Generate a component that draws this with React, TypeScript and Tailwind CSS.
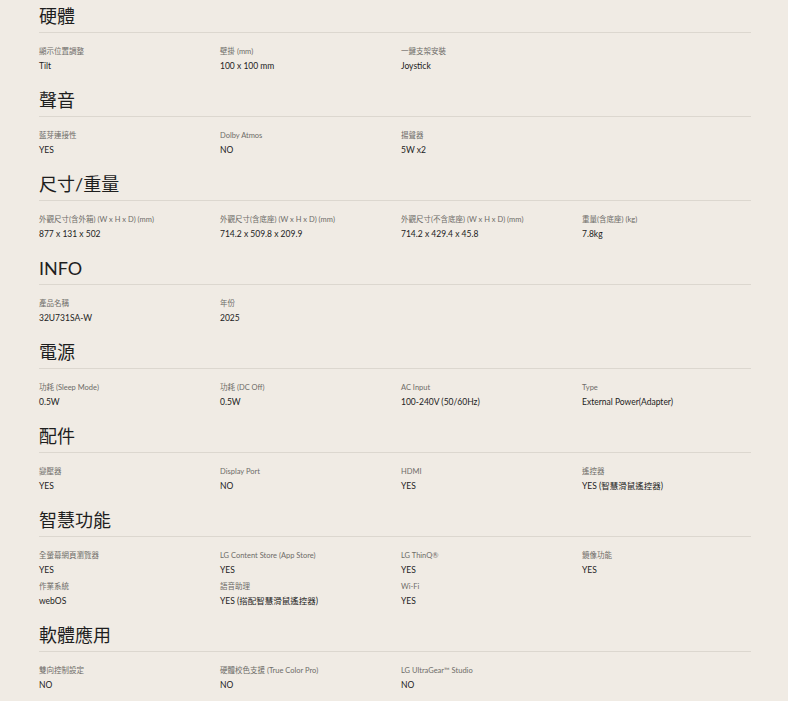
type Spec = { label: string; value: string };

const sections: { title: string; rows: Spec[] }[] = [
  {
    title: '硬體',
    rows: [
      { label: '顯示位置調整', value: 'Tilt' },
      { label: '壁掛 (mm)', value: '100 x 100 mm' },
      { label: '一鍵支架安裝', value: 'Joystick' },
    ],
  },
  {
    title: '聲音',
    rows: [
      { label: '藍芽連接性', value: 'YES' },
      { label: 'Dolby Atmos', value: 'NO' },
      { label: '揚聲器', value: '5W x2' },
    ],
  },
  {
    title: '尺寸/重量',
    rows: [
      { label: '外觀尺寸(含外箱) (W x H x D) (mm)', value: '877 x 131 x 502' },
      { label: '外觀尺寸(含底座) (W x H x D) (mm)', value: '714.2 x 509.8 x 209.9' },
      { label: '外觀尺寸(不含底座) (W x H x D) (mm)', value: '714.2 x 429.4 x 45.8' },
      { label: '重量(含底座) (kg)', value: '7.8kg' },
    ],
  },
  {
    title: 'INFO',
    rows: [
      { label: '產品名稱', value: '32U731SA-W' },
      { label: '年份', value: '2025' },
    ],
  },
  {
    title: '電源',
    rows: [
      { label: '功耗 (Sleep Mode)', value: '0.5W' },
      { label: '功耗 (DC Off)', value: '0.5W' },
      { label: 'AC Input', value: '100-240V (50/60Hz)' },
      { label: 'Type', value: 'External Power(Adapter)' },
    ],
  },
  {
    title: '配件',
    rows: [
      { label: '變壓器', value: 'YES' },
      { label: 'Display Port', value: 'NO' },
      { label: 'HDMI', value: 'YES' },
      { label: '遙控器', value: 'YES (智慧滑鼠遙控器)' },
    ],
  },
  {
    title: '智慧功能',
    rows: [
      { label: '全螢幕網頁瀏覽器', value: 'YES' },
      { label: 'LG Content Store (App Store)', value: 'YES' },
      { label: 'LG ThinQ®', value: 'YES' },
      { label: '鏡像功能', value: 'YES' },
      { label: '作業系統', value: 'webOS' },
      { label: '語音助理', value: 'YES (搭配智慧滑鼠遙控器)' },
      { label: 'Wi-Fi', value: 'YES' },
    ],
  },
  {
    title: '軟體應用',
    rows: [
      { label: '雙向控制設定', value: 'NO' },
      { label: '硬體校色支援 (True Color Pro)', value: 'NO' },
      { label: 'LG UltraGear™ Studio', value: 'NO' },
    ],
  },
];

// Lato for latin, CJK falls through to Noto
const font = { fontFamily: 'Lato, "Noto Sans CJK TC", sans-serif' };

const App = () => {
  return (
    <div className="min-h-[701px] w-full bg-[#f0ebe4] pt-1" style={font}>
      <div className="ml-[39px] flex w-[712px] flex-col gap-[15px]">
        {sections.map((section) => (
          <section key={section.title}>
            <h2 className="border-b border-[#dcd7cf] pb-1 text-[18px] leading-[24px] text-[#1e1e1e]">
              {section.title}
            </h2>
            <div className="grid grid-cols-4 gap-x-3 gap-y-1 pt-[13px]">
              {section.rows.map((row) => (
                <div key={row.label} className="flex flex-col gap-px">
                  <div className="text-[7.5px] leading-[12px] text-[#6e6b68]">{row.label}</div>
                  <div className="text-[8.5px] leading-[14px] text-[#222]">{row.value}</div>
                </div>
              ))}
            </div>
          </section>
        ))}
      </div>
    </div>
  );
};

export default App;
